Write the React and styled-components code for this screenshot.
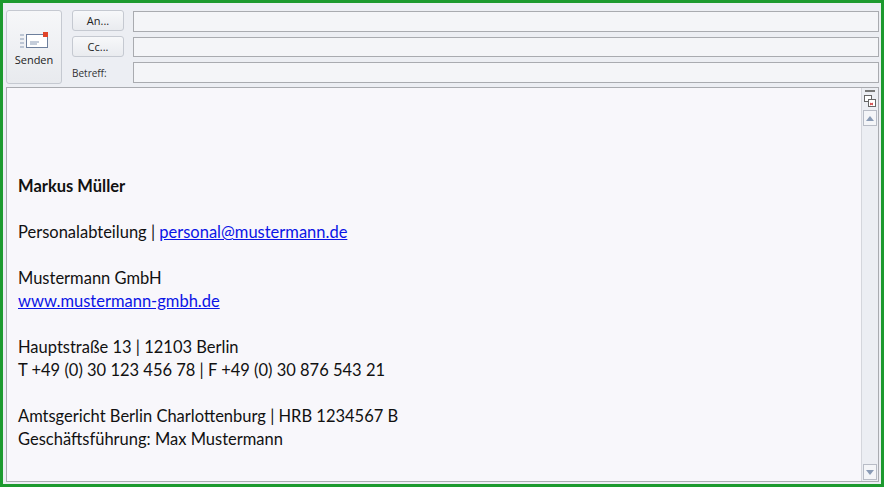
import React from "react";
import styled, { createGlobalStyle } from "styled-components";

const G = createGlobalStyle`
  html,body{margin:0;padding:0;}
  body{width:884px;height:487px;overflow:hidden;font-family:"Segoe UI","Open Sans",sans-serif;}
`;
const Frame = styled.div`
  box-sizing:border-box;width:884px;height:487px;border:3px solid #1c9a2e;background:#eceef3;
  display:flex;flex-direction:column;padding:7px 2px 2px 2px;gap:4px;
`;
const Header = styled.div`display:flex;align-items:stretch;padding-left:1px;height:73px;`;
const SendBtn = styled.div`
  box-sizing:border-box;width:56px;height:74px;border:1px solid #c5c9d1;border-radius:3px;
  background:linear-gradient(#f6f7f9,#e8eaee);display:flex;flex-direction:column;align-items:center;
  justify-content:center;gap:3px;font-size:11px;color:#222;padding-top:4px;
`;
const Labels = styled.div`display:flex;flex-direction:column;gap:5px;margin-left:10px;width:61px;`;
const SmallBtn = styled.div`
  box-sizing:border-box;width:52px;height:21px;border:1px solid #c5c9d1;border-radius:3px;
  background:linear-gradient(#f7f8fa,#e9ebef);font-size:11px;color:#222;display:flex;align-items:center;justify-content:center;
`;
const Label = styled.div`font-size:10px;color:#333;height:21px;display:flex;align-items:center;`;
const Fields = styled.div`flex:1;display:flex;flex-direction:column;gap:5px;margin-left:0;padding-top:1px;margin-right:0;`;
const Input = styled.div`box-sizing:border-box;height:21px;border:1px solid #a9abb0;background:#f4f5f8;`;
const Body = styled.div`
  flex:1;display:flex;border:1px solid #a9abb0;background:#f8f7fb;margin-left:1px;
`;
const Text = styled.div`
  flex:1;padding:87px 0 0 11px;font-family:Lato,"Open Sans",sans-serif;font-size:16.5px;line-height:23px;color:#111;
`;
const Line = styled.div`height:23px;font-weight:${p=>p.b?700:400};`;
const A = styled.a`color:#0a14e6;text-decoration:underline;`;
const Scroll = styled.div`
  width:16px;border-left:1px solid #d4d6dc;background:#eceef3;display:flex;flex-direction:column;align-items:center;
  padding-top:2px;gap:2px;
`;
const Arrow = styled.div`
  box-sizing:border-box;width:14px;height:16px;border:1px solid #b8bcc6;background:#f4f5f8;display:flex;align-items:center;justify-content:center;
  margin-top:${p=>p.auto?"auto":"0"};margin-bottom:${p=>p.auto?"1px":"0"};
`;

export default function App(){
  return <><G/><Frame>
    <Header>
      <SendBtn>
        <svg width="30" height="18" viewBox="0 0 30 18">
          <g stroke="#8a9bb5" strokeWidth="1"><line x1="1" y1="4" x2="5" y2="4"/><line x1="1" y1="8" x2="5" y2="8"/><line x1="1" y1="12" x2="5" y2="12"/><line x1="1" y1="16" x2="5" y2="16"/></g>
          <rect x="7.5" y="3.5" width="21" height="13" fill="#fff" stroke="#6d7f9c"/>
          <line x1="11" y1="11" x2="20" y2="11" stroke="#8a9bb5"/><line x1="11" y1="13" x2="18" y2="13" stroke="#8a9bb5"/>
          <rect x="24" y="1" width="5" height="5" fill="#e0442a"/>
        </svg>
        Senden
      </SendBtn>
      <Labels><SmallBtn>An...</SmallBtn><SmallBtn>Cc...</SmallBtn><Label>Betreff:</Label></Labels>
      <Fields><Input/><Input/><Input/></Fields>
    </Header>
    <Body>
      <Text>
        <Line b>Markus Müller</Line><Line/>
        <Line>Personalabteilung | <A>personal@mustermann.de</A></Line><Line/>
        <Line>Mustermann GmbH</Line>
        <Line><A>www.mustermann-gmbh.de</A></Line><Line/>
        <Line>Hauptstraße 13 | 12103 Berlin</Line>
        <Line>T +49 (0) 30 123 456 78 | F +49 (0) 30 876 543 21</Line><Line/>
        <Line>Amtsgericht Berlin Charlottenburg | HRB 1234567 B</Line>
        <Line>Geschäftsführung: Max Mustermann</Line>
      </Text>
      <Scroll>
        <div style={{width:10,height:2,background:"#777"}}/>
        <svg width="14" height="14" viewBox="0 0 14 14"><rect x="1.5" y="1.5" width="7" height="6" fill="#fff" stroke="#666"/><rect x="5.5" y="5.5" width="7" height="7" fill="#fff" stroke="#666"/><path d="M7 9l3 2M10 9l-3 2" stroke="#c33"/></svg>
        <Arrow><svg width="8" height="5"><path d="M0 5L4 0L8 5Z" fill="#8a9bb5"/></svg></Arrow>
        <Arrow auto><svg width="8" height="5"><path d="M0 0L4 5L8 0Z" fill="#8a9bb5"/></svg></Arrow>
      </Scroll>
    </Body>
  </Frame></>;
}
